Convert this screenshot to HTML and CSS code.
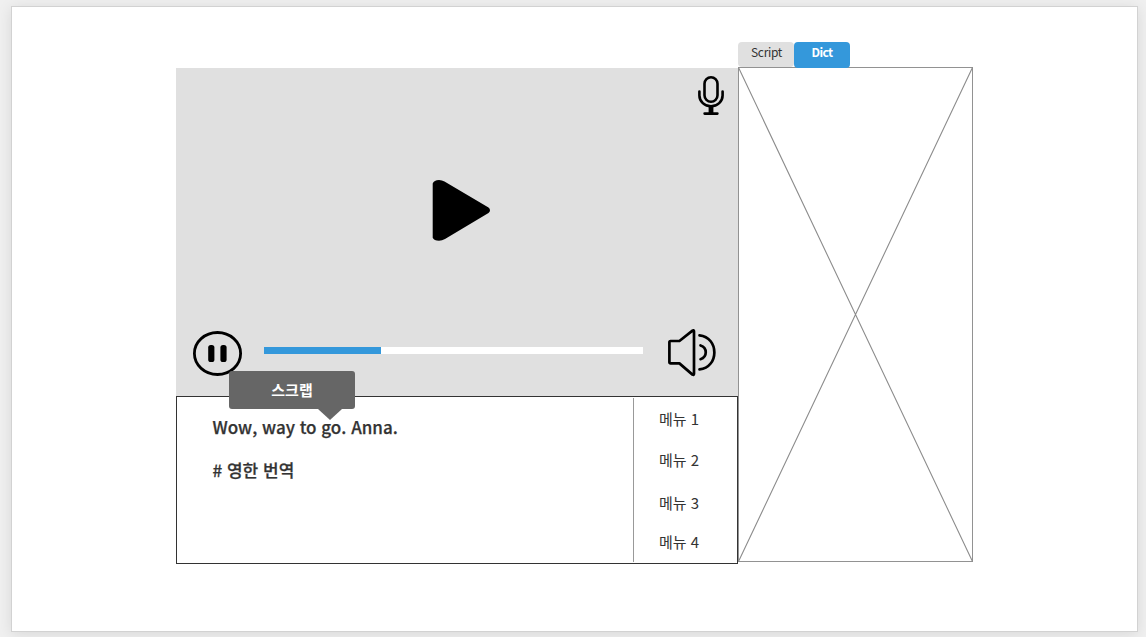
FILE: index.html
```html
<!DOCTYPE html>
<html lang="ko">
<head>
<meta charset="utf-8">
<title>Player</title>
<link rel="stylesheet" href="styles.css">
</head>
<body>
<main class="sheet">
  <section class="player">
    <div class="video">
      <svg class="mic" width="26" height="40" viewBox="0 0 26 40">
        <g fill="none" stroke="#000" stroke-width="2.600" stroke-linecap="round">
          <rect x="6.500" y="1.300" width="13" height="24.400" rx="6.500"/>
          <path d="M1.400 15.500v4a11.600 10.800 0 0 0 23.200 0v-4M6.600 37.600h12.800"/>
          <path d="M13 31v7" stroke-width="4.800" stroke-linecap="butt"/>
        </g>
      </svg>
      <svg class="play" width="60" height="62" viewBox="0 0 60 62">
        <path d="M.7 4.500Q2 1 7 1q3 0 5.500 1.500L56.500 28.500Q58 29.500 58 31.200T56.500 34L13 60Q10 61.700 7 61.700 2 61.700.7 58.700Z"/>
      </svg>
      <div class="controls">
        <svg class="pause" width="49" height="45" viewBox="0 0 49 45">
          <ellipse cx="24.500" cy="22.500" rx="23.100" ry="21" fill="none" stroke="#000" stroke-width="2.800"/>
          <rect x="15.200" y="14" width="6.200" height="17" rx="2.600"/>
          <rect x="27.400" y="14" width="6.200" height="17" rx="2.600"/>
        </svg>
        <div class="track"><div class="progress"></div></div>
        <svg class="volume" width="49" height="48" viewBox="0 0 49 48">
          <g fill="none" stroke="#000" stroke-width="2.700" stroke-linejoin="round" stroke-linecap="round">
            <path d="M1.400 13.200q0-1.200 1.200-1.200h8.800L24.500 1.600q1.500-.8 1.500.8v42.400q0 1.600-1.500.8L11.400 34.400H2.600q-1.200 0-1.200-1.200Z"/>
            <path d="M32.500 16.500c7 2.200 7 11.500 0 13.700M31.500 6.400c19.800 2 19.800 32 0 34"/>
          </g>
        </svg>
      </div>
    </div>
    <div class="caption">
      <div class="lines">
        <p class="line">Wow, way to go. Anna.</p>
        <p class="line translation"># 영한 번역</p>
      </div>
      <ul class="menu">
        <li>메뉴 1</li>
        <li>메뉴 2</li>
        <li>메뉴 3</li>
        <li>메뉴 4</li>
      </ul>
      <div class="tooltip">스크랩</div>
    </div>
  </section>
  <aside class="side">
    <nav class="tabs">
      <span class="tab">Script</span>
      <span class="tab active">Dict</span>
    </nav>
    <div class="panel">
      <svg width="235" height="495" viewBox="0 0 235 495">
        <path d="M.5.500 234.500 494.500M234.500.500.500 494.500" stroke="#8c8c8c" stroke-width="1.100" fill="none"/>
      </svg>
    </div>
  </aside>
</main>
</body>
</html>
```
FILE: styles.css
```css
* { box-sizing: border-box; }
body {
  margin: 0;
  height: 637px;
  padding: 6px 8px 5px 11px;
  overflow: hidden;
  background: #f0f0f0;
  color: #333;
  font-family: "Noto Sans CJK KR", sans-serif;
}
.sheet {
  display: flex;
  align-items: flex-start;
  width: 1127px;
  height: 626px;
  padding: 35px 0 0 164px;
  background: #fff;
  border: 1px solid #d2d2d2;
  box-shadow: 0 2px 14px rgba(0, 0, 0, .1);
}
.player { width: 562px; margin-top: 26px; }
.video {
  display: flex;
  flex-direction: column;
  height: 328px;
  background: #e0e0e0;
}
.mic { align-self: flex-end; margin: 8px 14.500px 0 0; }
.play { margin: 63px 0 0 256px; }
.controls {
  display: flex;
  align-items: flex-start;
  margin-top: 88px;
  padding-left: 17px;
}
.pause { margin-top: 2px; }
.track {
  width: 379px;
  height: 7px;
  margin: 18px 25px 0 22px;
  background: #fff;
}
.progress { width: 117px; height: 7px; background: #3498db; }
.caption {
  position: relative;
  display: flex;
  height: 168px;
  border: 1px solid #333;
}
.lines { width: 456px; padding: 18px 0 0 35.500px; }
.line {
  margin: 0;
  font-size: 17px;
  font-weight: 500;
  line-height: 24px;
  -webkit-text-stroke: .25px #333;
}
.translation { margin-top: 19px; }
.menu {
  width: 104px;
  height: 164px;
  margin: 1px 0 0;
  padding: 10px 0 0 25px;
  border-left: 1px solid #999;
  list-style: none;
  font-size: 15px;
  line-height: 22px;
}
.menu li { margin-bottom: 19px; }
.menu li:nth-child(2) { margin-bottom: 21px; }
.menu li:nth-child(3) { margin-bottom: 17px; }
.tooltip {
  position: absolute;
  left: 52px;
  top: -26px;
  width: 126px;
  height: 38px;
  border-radius: 3px;
  background: #666;
  color: #fff;
  font-size: 15px;
  font-weight: 700;
  line-height: 38px;
  text-align: center;
}
.tooltip::after {
  content: "";
  position: absolute;
  left: 89px;
  top: 38px;
  border: solid transparent;
  border-width: 11px 12px 0;
  border-top-color: #666;
}
.side { width: 235px; }
.tabs { display: flex; height: 25px; }
.tab {
  width: 56px;
  height: 25px;
  padding-left: 1px;
  border-radius: 4px;
  background: #e0e0e0;
  font-size: 12px;
  line-height: 20px;
  letter-spacing: -.35px;
  text-align: center;
}
.tab.active {
  height: 26px;
  padding-left: 0;
  background: #3498db;
  color: #fff;
  font-weight: 700;
  letter-spacing: -.6px;
}
.panel { height: 495px; box-shadow: inset 0 0 0 1px #929292; }
.panel svg { display: block; }
```
